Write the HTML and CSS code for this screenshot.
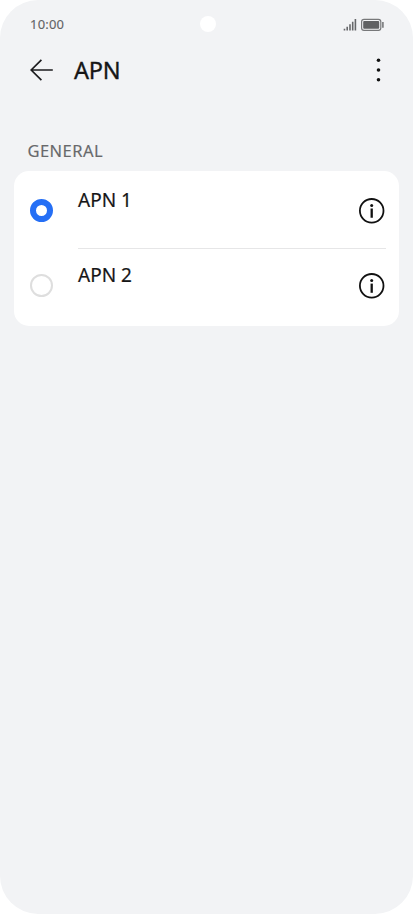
FILE: index.html
```html
<!DOCTYPE html>
<html lang="en">
<head>
<meta charset="utf-8">
<title>APN</title>
<link rel="stylesheet" href="styles.css">
</head>
<body>
<main class="screen">
  <div class="status">
    <span class="time">10:00</span>
    <svg class="status-icons" width="42" height="14" viewBox="0 0 42 14">
      <path d="M1.5 10.8v1.7M4.2 8.8v3.7M7 6.3v6.2M9.7 3.7v8.8M12.4 1v11.5" fill="none" stroke="#66676a" stroke-width="1.6"/>
      <rect x="18.6" y="1.4" width="19.2" height="10.9" rx="2.4" fill="none" stroke="#77787a" stroke-width="1.2"/>
      <rect x="20.2" y="3" width="16" height="7.7" rx="1" fill="#606163"/>
      <path d="M39.9 4v5.8" stroke="#77787a" stroke-width="1.6"/>
    </svg>
    <span class="camera"></span>
  </div>
  <header class="bar">
    <svg class="back" width="24" height="24" viewBox="0 0 24 24"><path d="M22.8 12H1.4M11.4 1.8L1.2 12l10.2 10.2" fill="none" stroke="#1c1c1e" stroke-width="1.7"/></svg>
    <h1 class="title">APN</h1>
    <svg class="more" width="6" height="26" viewBox="0 0 6 26"><g fill="#111"><circle cx="3.5" cy="3.3" r="1.8"/><circle cx="3.5" cy="13" r="1.8"/><circle cx="3.5" cy="22.7" r="1.8"/></g></svg>
  </header>
  <h2 class="section">GENERAL</h2>
  <section class="card">
    <div class="row">
      <span class="radio radio-on"></span>
      <span class="name">APN 1</span>
      <svg class="info" width="28" height="28" viewBox="0 0 28 28"><circle cx="13.7" cy="13.8" r="11.8" fill="none" stroke="#111" stroke-width="1.8"/><circle cx="13.7" cy="8.4" r="1.5" fill="#111"/><path d="M13.7 11.6v9.2" stroke="#111" stroke-width="2.3"/></svg>
    </div>
    <div class="row">
      <span class="radio"></span>
      <span class="name">APN 2</span>
      <svg class="info" width="28" height="28" viewBox="0 0 28 28"><circle cx="13.7" cy="13.8" r="11.8" fill="none" stroke="#111" stroke-width="1.8"/><circle cx="13.7" cy="8.4" r="1.5" fill="#111"/><path d="M13.7 11.6v9.2" stroke="#111" stroke-width="2.3"/></svg>
    </div>
  </section>
</main>
</body>
</html>
```
FILE: styles.css
```css
* { box-sizing: border-box; }
body {
  margin: 0;
  background: #fff;
  color: #161617;
  font-family: "Noto Sans", sans-serif;
}
.screen {
  width: 413px;
  height: 914px;
  overflow: hidden;
  background: #f2f3f5;
  border-radius: 38px;
}
.status {
  position: relative;
  display: flex;
  align-items: center;
  justify-content: space-between;
  height: 49px;
  padding: 0 28px 0 30px;
}
.time {
  margin-bottom: 1px;
  color: #626365;
  font-size: 13px;
  line-height: 18px;
  letter-spacing: 0.2px;
  -webkit-text-stroke: 0.1px;
}
.camera {
  position: absolute;
  left: 200px;
  top: 16px;
  width: 16px;
  height: 16px;
  border-radius: 50%;
  background: #fff;
}
.bar {
  display: flex;
  align-items: center;
  height: 42px;
  padding: 0 32px 0 30px;
}
.title {
  flex: 1;
  margin: 0 0 0 20px;
  font-size: 23.5px;
  font-weight: 400;
  line-height: 32px;
  letter-spacing: -0.2px;
  -webkit-text-stroke: 0.35px;
}
.section {
  margin: 48px 0 8px 27.5px;
  color: #68696b;
  font-size: 16.5px;
  font-weight: 400;
  line-height: 24px;
  letter-spacing: 0.45px;
  -webkit-text-stroke: 0.15px;
}
.card {
  width: 385px;
  height: 155px;
  margin-left: 14px;
  padding: 2px 0 0 16px;
  background: #fff;
  border-radius: 15px;
}
.row {
  position: relative;
  display: grid;
  grid-template-columns: 48px 1fr 28px;
  align-items: center;
  height: 75px;
  padding-right: 13px;
}
.row:first-child::after {
  content: "";
  position: absolute;
  left: 48px;
  bottom: -1px;
  width: 308px;
  height: 1px;
  background: #e6e6e7;
}
.radio {
  width: 23px;
  height: 23px;
  border: 2px solid #dedede;
  border-radius: 50%;
}
.radio-on { border: 6px solid #256ff5; }
.name {
  align-self: start;
  margin-top: 14px;
  font-size: 19px;
  line-height: 26px;
  -webkit-text-stroke: 0.2px;
}
.more, .back, .info { display: block; }
```
